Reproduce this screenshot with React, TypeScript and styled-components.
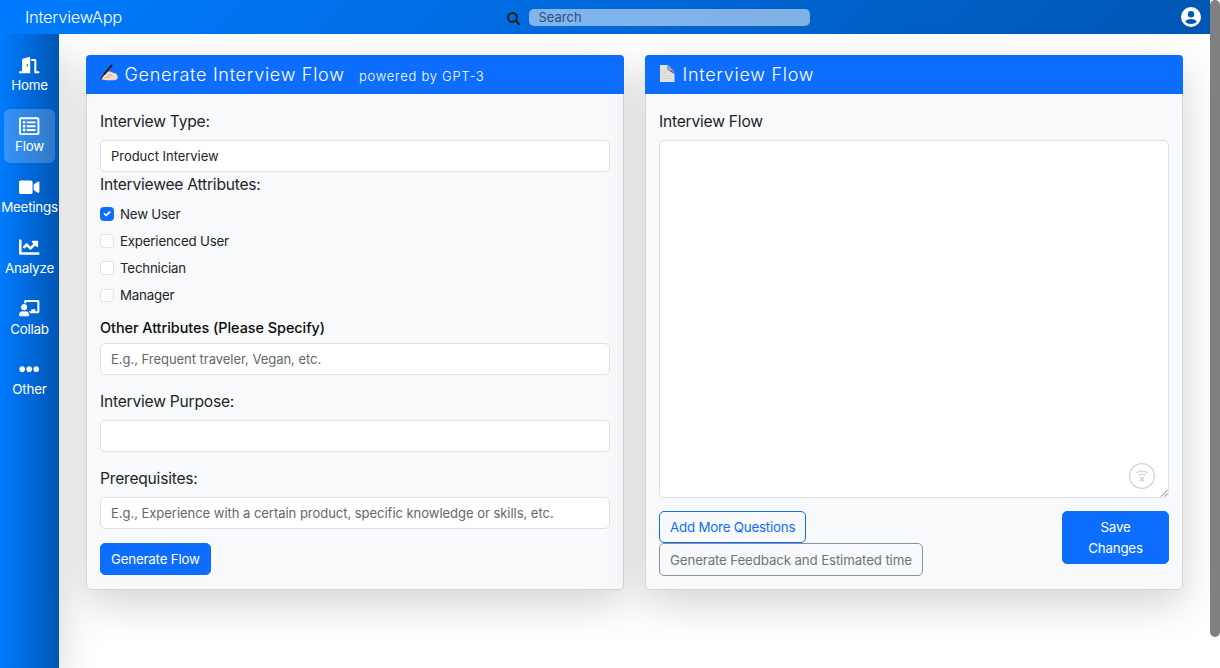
import React from 'react';
import styled, { createGlobalStyle } from 'styled-components';
import {
  FaDoorOpen, FaRegListAlt, FaVideo, FaChartLine, FaChalkboardTeacher, FaEllipsisH, FaSearch,
} from 'react-icons/fa';

const Global = createGlobalStyle`
  *, *::before, *::after { box-sizing: border-box; }
  body { margin: 0; background: #fff; overflow: hidden; }
  body, button, input, textarea { font-family: Inter, 'Liberation Sans', sans-serif; }
`;

const Page = styled.div`
  display: grid;
  grid-template-columns: 1210px 10px;
  width: 1220px;
  height: 668px;
  color: #212529;
  font-size: 13.5px;
  line-height: 20px;
`;

const Shell = styled.div`
  display: flex;
  flex-direction: column;
  overflow: hidden;
`;

const ScrollTrack = styled.div`
  background: #fff;
`;

const ScrollThumb = styled.div`
  height: 637px;
  border-radius: 5px;
  background: #808080;
`;

const TopBar = styled.header`
  position: relative;
  z-index: 2;
  display: grid;
  grid-template-columns: 507px 303px 1fr;
  align-items: center;
  height: 34px;
  flex: none;
  background: linear-gradient(135deg, #007bff, #0056b3);
`;

const Brand = styled.div`
  padding-left: 25px;
  color: #fff;
  font-size: 16.5px;
  font-weight: 300;
  letter-spacing: -0.26px;
`;

const SearchBox = styled.div`
  display: flex;
  align-items: center;
  gap: 8px;
  color: #212529;
  & > svg { flex: none; margin-top: 3px; }
`;

const SearchInput = styled.input`
  flex: 1;
  min-width: 0;
  height: 17px;
  padding: 0 10px;
  border: 0;
  border-radius: 5px;
  background: rgba(255, 255, 255, 0.5);
  font-size: 13px;
  outline: 0;
  &::placeholder { color: #2f5077; opacity: 1; }
`;

const Account = styled.div`
  display: flex;
  justify-content: flex-end;
  padding-right: 9px;
`;

const Body = styled.div`
  display: flex;
  flex: 1;
`;

const Sidebar = styled.nav`
  display: flex;
  flex-direction: column;
  gap: 7px;
  width: 59px;
  flex: none;
  padding: 14px 4px;
  background: linear-gradient(90deg, #007bff, #0056b3);
  box-shadow: 0 14px 41px rgba(0, 0, 0, 0.175);
`;

const NavItem = styled.a<{ $active?: boolean }>`
  display: flex;
  flex-direction: column;
  align-items: center;
  height: 53.8px;
  padding-top: 7px;
  border-radius: 6px;
  color: #fff;
  font-size: 13.4px;
  letter-spacing: -0.22px;
  white-space: nowrap;
  background: ${(p) => (p.$active ? 'rgba(255,255,255,0.2)' : 'transparent')};
`;

const Main = styled.main`
  display: flex;
  align-items: flex-start;
  gap: 21px;
  padding: 21px 27px;
`;

const Card = styled.section`
  width: 538px;
  height: 534.5px;
  border: 1px solid #d2d5d9;
  border-radius: 5px;
  background: #f8f9fb;
  box-shadow: 0 14px 41px rgba(0, 0, 0, 0.175);
`;

const CardHeader = styled.h2`
  display: flex;
  align-items: center;
  height: 39px;
  margin: -1px -1px 0;
  padding: 0 14px;
  border-radius: 4px 4px 0 0;
  background: #0d6efd;
  color: #fff;
  font-size: 18px;
  font-weight: 300;
  letter-spacing: 0.72px;
  & > svg { flex: none; overflow: visible; margin-top: -2px; }
`;

const HeaderTitle = styled.span`
  margin: 1px 0 0 6.5px;
`;

const Powered = styled.small`
  margin: 3px 0 0 14.5px;
  font-size: 13px;
  font-weight: 300;
  letter-spacing: 0.72px;
`;

const CardBody = styled.div`
  padding: 14px 13px 13px;
`;

const Label = styled.label<{ $top?: number; $bottom?: number; $bold?: boolean }>`
  display: block;
  height: 26px;
  line-height: 26px;
  margin: ${(p) => p.$top ?? 0}px 0 ${(p) => p.$bottom ?? 0}px;
  color: ${(p) => (p.$bold ? '#0b0d0f' : '#212529')};
  font-size: ${(p) => (p.$bold ? 14.4 : 15.6)}px;
  font-weight: ${(p) => (p.$bold ? 500 : 400)};
  letter-spacing: ${(p) => (p.$bold ? -0.03 : -0.22)}px;
`;

const Field = styled.input`
  display: block;
  width: 100%;
  height: 32px;
  padding: 0 10px;
  border: 1px solid #dee2e6;
  border-radius: 5px;
  background: #fff;
  color: #212529;
  font-size: 13px;
  letter-spacing: -0.03px;
  outline: 0;
  &::placeholder { color: #62686d; opacity: 1; }
`;

const CheckRow = styled.label`
  display: flex;
  align-items: center;
  gap: 6.5px;
  height: 27.2px;
  font-size: 13.3px;
  letter-spacing: -0.2px;
`;

const CheckBox = styled.span<{ $checked?: boolean }>`
  display: flex;
  width: 13.5px;
  height: 13.5px;
  border: 1px solid ${(p) => (p.$checked ? '#0d6efd' : '#dee2e6')};
  border-radius: 3.4px;
  background: ${(p) => (p.$checked ? '#0d6efd' : '#fff')};
`;

const Button = styled.button<{ $kind: 'solid' | 'primary' | 'muted' }>`
  height: 32.4px;
  padding: 1px 10px 0;
  border: 1px solid ${(p) => (p.$kind === 'muted' ? '#8b9299' : '#0d6efd')};
  border-radius: 5px;
  background: ${(p) => (p.$kind === 'solid' ? '#0d6efd' : 'transparent')};
  color: ${(p) => ({ solid: '#fff', primary: '#0d6efd', muted: '#6c757d' })[p.$kind]};
  font-size: 13.3px;
  line-height: 20.4px;
  letter-spacing: ${(p) => (p.$kind === 'muted' ? -0.13 : -0.19)}px;
`;

const SubmitButton = styled(Button)`
  margin-top: 13.5px;
`;

const SaveButton = styled(Button)`
  width: 107px;
  height: 52.5px;
  padding: 1px 20px 0;
`;

const EditorWrap = styled.div`
  position: relative;
`;

const Editor = styled.textarea`
  display: block;
  width: 100%;
  height: 357.5px;
  border: 1px solid #dee2e6;
  border-radius: 5px;
  background: #fff;
  resize: none;
  outline: 0;
`;

const OfflineBadge = styled.svg`
  position: absolute;
  right: 13px;
  bottom: 8px;
`;

const Grip = styled.svg`
  position: absolute;
  right: 1px;
  bottom: 1px;
`;

const Actions = styled.div`
  display: flex;
  justify-content: space-between;
  align-items: flex-start;
  margin-top: 13.5px;
`;

const ActionStack = styled.div`
  display: flex;
  flex-direction: column;
  align-items: flex-start;
`;

const nav = [
  { label: 'Home', icon: FaDoorOpen },
  { label: 'Flow', icon: FaRegListAlt, active: true },
  { label: 'Meetings', icon: FaVideo },
  { label: 'Analyze', icon: FaChartLine },
  { label: 'Collab', icon: FaChalkboardTeacher },
  { label: 'Other', icon: FaEllipsisH },
];

const attributes = [
  { label: 'New User', checked: true },
  { label: 'Experienced User' },
  { label: 'Technician' },
  { label: 'Manager' },
];

const WritingHand = () => (
  <svg width="18" height="18" viewBox="0 0 18 18">
    <path d="M1 14.200 3.500 10.500 6 7.500 9.500 6.200l3 1.300 3.800 1.300 1.400 2.400-.3 2.900-3 1.100H6z" fill="#f6dac6" />
    <path d="M7 10 10 9.400l2 1.200-3.500.8M5 12.600l4-.3" fill="none" stroke="#d9ab91" strokeWidth=".7" />
    <path d="M11.500 0.500 4.500 8.800" stroke="#1b1f26" strokeWidth="2" strokeLinecap="round" />
    <path d="M4.800 8.600.3 14.300" stroke="#2c2c30" strokeWidth="1.300" />
  </svg>
);

const PageIcon = () => (
  <svg width="17" height="18" viewBox="0 0 17 18">
    <path d="M1 0h8l6.500 7v10H1z" fill="#e2e2e2" />
    <path d="M8.500 0 15.500 7.500V9L8.500 5z" fill="#5d6470" />
    <path d="M8.500 0c.8 2 .8 4 .3 5.800 2.500-.4 5-.1 6.700 1.400z" fill="#a4a8ad" />
    <path d="M3 6h4M3 8.500h5M3 11h10M3 13.500h10" stroke="#cfcfcf" strokeWidth=".7" />
  </svg>
);

export default function App() {
  return (
    <>
      <Global />
      <Page>
        <Shell>
          <TopBar>
            <Brand>InterviewApp</Brand>
            <SearchBox>
              <FaSearch size={13.5} />
              <SearchInput placeholder="Search" />
            </SearchBox>
            <Account>
              <svg width="20" height="20" viewBox="0 0 20 20">
                <circle cx="10" cy="10" r="10" fill="#fff" />
                <circle cx="10" cy="7.300" r="3.200" fill="#0058b8" />
                <ellipse cx="10" cy="14.600" rx="5.400" ry="2.500" fill="#0058b8" />
              </svg>
            </Account>
          </TopBar>
          <Body>
            <Sidebar>
              {nav.map(({ label, icon: Icon, active }) => (
                <NavItem key={label} $active={active}>
                  <Icon size={20.4} />
                  <span>{label}</span>
                </NavItem>
              ))}
            </Sidebar>
            <Main>
              <Card>
                <CardHeader>
                  <WritingHand />
                  <HeaderTitle>Generate Interview Flow</HeaderTitle>
                  <Powered>powered by GPT-3</Powered>
                </CardHeader>
                <CardBody>
                  <Label $top={1} $bottom={5}>Interview Type:</Label>
                  <Field defaultValue="Product Interview" />
                  <Label $bottom={2.2}>Interviewee Attributes:</Label>
                  {attributes.map(({ label, checked }) => (
                    <CheckRow key={label}>
                      <CheckBox $checked={checked}>
                        {checked && (
                          <svg viewBox="0 0 20 20">
                            <path d="m6 10 3 3 6-6" fill="none" stroke="#fff" strokeWidth="3" strokeLinecap="round" strokeLinejoin="round" />
                          </svg>
                        )}
                      </CheckBox>
                      {label}
                    </CheckRow>
                  ))}
                  <Label $bold $top={6} $bottom={2}>Other Attributes (Please Specify)</Label>
                  <Field placeholder="E.g., Frequent traveler, Vegan, etc." />
                  <Label $top={14} $bottom={5}>Interview Purpose:</Label>
                  <Field />
                  <Label $top={14} $bottom={5.3}>Prerequisites:</Label>
                  <Field placeholder="E.g., Experience with a certain product, specific knowledge or skills, etc." />
                  <SubmitButton $kind="solid">Generate Flow</SubmitButton>
                </CardBody>
              </Card>
              <Card>
                <CardHeader>
                  <PageIcon />
                  <HeaderTitle>Interview Flow</HeaderTitle>
                </CardHeader>
                <CardBody>
                  <Label $top={1} $bottom={5}>Interview Flow</Label>
                  <EditorWrap>
                    <Editor />
                    <OfflineBadge width="28" height="28" viewBox="0 0 28 28" fill="none" stroke="#d2d2d2">
                      <circle cx="14" cy="14" r="12.400" strokeWidth="1.300" />
                      <path d="M8.500 11c3.500-2.700 7.500-2.700 11 0M10.500 13.400c2.200-1.600 4.800-1.600 7 0M12 15l4 4.500M16 15l-4 4.500" strokeWidth="1.200" />
                    </OfflineBadge>
                    <Grip width="8" height="8" viewBox="0 0 8 8" stroke="#777">
                      <path d="M1 7.500 7.500 1M4.500 7.500l3-3" />
                    </Grip>
                  </EditorWrap>
                  <Actions>
                    <ActionStack>
                      <Button $kind="primary">Add More Questions</Button>
                      <Button $kind="muted">Generate Feedback and Estimated time</Button>
                    </ActionStack>
                    <SaveButton $kind="solid">Save Changes</SaveButton>
                  </Actions>
                </CardBody>
              </Card>
            </Main>
          </Body>
        </Shell>
        <ScrollTrack>
          <ScrollThumb />
        </ScrollTrack>
      </Page>
    </>
  );
}
